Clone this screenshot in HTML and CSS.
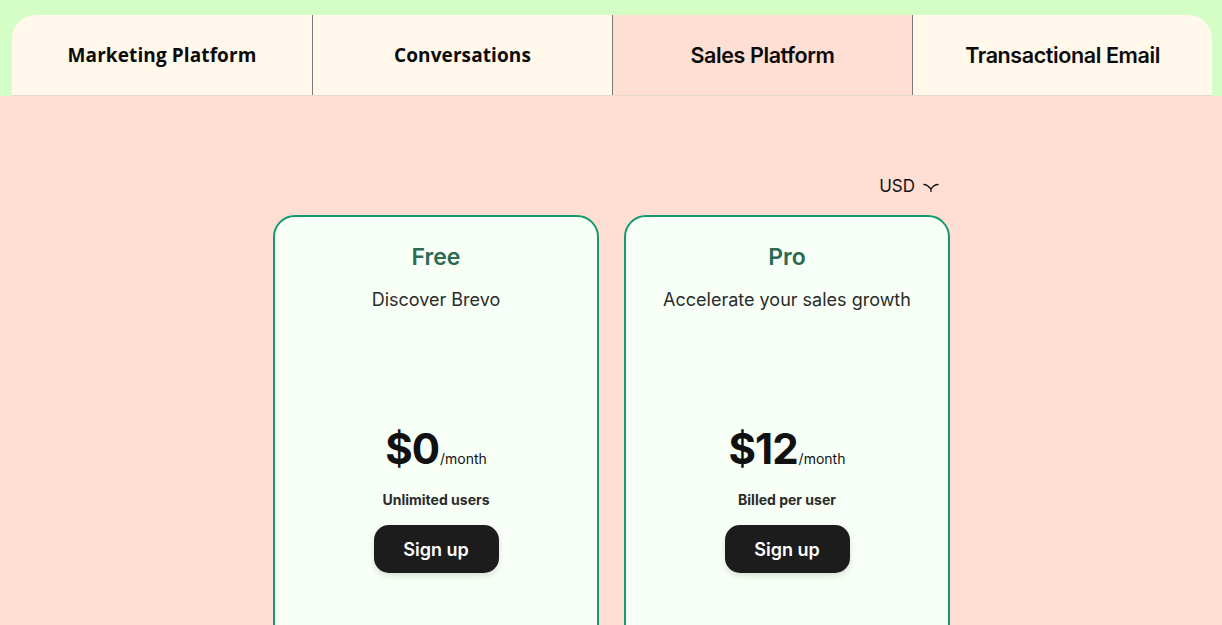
FILE: index.html
```html
<!DOCTYPE html>
<html>
<head>
<meta charset="utf-8">
<link rel="stylesheet" href="styles.css">
</head>
<body>
<header class="top">
  <nav class="tabs">
    <div class="tab tab-alt">Marketing Platform</div>
    <div class="tab tab-alt">Conversations</div>
    <div class="tab active">Sales Platform</div>
    <div class="tab">Transactional Email</div>
  </nav>
</header>
<main class="content">
  <div class="plans">
    <div class="currency">
      <span>USD</span>
      <svg width="16" height="10" viewBox="0 0 16 10"><path d="M1 2.5 C3.5 2.5 5 3.5 8 7 C10 4 12 2.5 15 2.5 M8 7 L8 9.5" fill="none" stroke="#111" stroke-width="1.3" stroke-linecap="round"/></svg>
    </div>
    <div class="cards">
      <section class="card">
        <h2 class="card-title">Free</h2>
        <p class="card-sub">Discover Brevo</p>
        <div class="price"><span class="amount">$0</span><span class="per">/month</span></div>
        <p class="note">Unlimited users</p>
        <button class="btn">Sign up</button>
      </section>
      <section class="card">
        <h2 class="card-title">Pro</h2>
        <p class="card-sub">Accelerate your sales growth</p>
        <div class="price"><span class="amount">$12</span><span class="per">/month</span></div>
        <p class="note">Billed per user</p>
        <button class="btn">Sign up</button>
      </section>
    </div>
  </div>
</main>
</body>
</html>
```
FILE: styles.css
```css
* { box-sizing: border-box; }
html, body { margin: 0; padding: 0; }
body {
  font-family: Inter, "Liberation Sans", sans-serif;
  background: #ffded3;
  color: #111;
  height: 625px;
  overflow: hidden;
}
.top {
  background: #d5fec6;
  padding: 15px 10px 0 12px;
}
.tabs {
  display: grid;
  grid-template-columns: repeat(4, 300px);
  border-radius: 24px 24px 0 0;
  overflow: hidden;
  border-bottom: 1px solid #e4d8d0;
}
.tab {
  height: 80px;
  display: flex;
  align-items: center;
  justify-content: center;
  background: #fff8eb;
  font-size: 21.5px;
  font-weight: 600;
  color: #0b0b0b;
  border-left: 1px solid #7a7a7a;
  letter-spacing: -0.4px;
}
.tab:first-child { border-left: none; }
.tab-alt {
  font-family: "Open Sans", "Liberation Sans", sans-serif;
  font-weight: 700;
  font-size: 19px;
  letter-spacing: 0.1px;
}
.tab.active { background: #ffded3; }
.content {
  display: flex;
  justify-content: center;
  padding-top: 79px;
}
.plans {
  width: 676px;
  display: flex;
  flex-direction: column;
}
.currency {
  align-self: flex-end;
  margin-right: 10px;
  display: flex;
  align-items: center;
  gap: 8px;
  font-size: 17px;
  height: 22px;
}
.currency svg { margin-top: 2px; }
.cards {
  display: grid;
  grid-template-columns: 326px 326px;
  gap: 25px;
  margin-top: 18px;
}
.card {
  border: 2px solid #17996f;
  border-radius: 22px;
  background: #f7fff6;
  height: 440px;
  display: flex;
  flex-direction: column;
  align-items: center;
  padding-top: 25px;
}
.card-title {
  margin: 0;
  font-size: 23px;
  font-weight: 600;
  color: #2b6b52;
  line-height: 30px;
}
.card-sub {
  margin: 16px 0 0;
  font-size: 18px;
  color: #2b2b2b;
  line-height: 24px;
}
.price {
  margin-top: 113px;
  display: flex;
  align-items: baseline;
}
.amount {
  font-size: 42px;
  font-weight: 700;
  letter-spacing: -1px;
  line-height: 48px;
}
.per {
  font-size: 14px;
  margin-left: 1px;
}
.note {
  margin: 18px 0 0;
  font-size: 14px;
  font-weight: 700;
  color: #2b2b2b;
}
.btn {
  margin-top: 17px;
  width: 125px;
  height: 48px;
  border: none;
  border-radius: 15px;
  background: #1c1c1c;
  color: #fff;
  font-family: Inter, "Liberation Sans", sans-serif;
  font-size: 18px;
  font-weight: 600;
  box-shadow: 0 3px 6px rgba(0,0,0,0.12);
}
```
